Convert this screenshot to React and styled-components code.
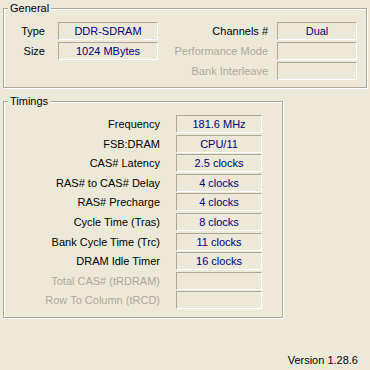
import React from 'react';
import styled, { createGlobalStyle } from 'styled-components';

const Global = createGlobalStyle`
  html, body { margin: 0; padding: 0; background: #ECE9D8; }
  body { font-family: "Liberation Sans", Arial, sans-serif; font-size: 11px; color: #000; }
`;

const Window = styled.div`
  width: 370px;
  height: 370px;
  box-sizing: border-box;
  background: #ECE9D8;
  display: flex;
  flex-direction: column;
  padding-top: 1px;
  overflow: hidden;
`;

const Group = styled.fieldset`
  box-sizing: border-box;
  width: ${p => p.$w}px;
  margin: ${p => p.$mt}px 0 0 3px;
  padding: 7px 0 ${p => p.$pb}px 0;
  border: 1px solid #ACA899;
  box-shadow: inset 1px 1px 0 #fff, 1px 1px 0 #fff;
  min-width: 0;
`;

const Legend = styled.legend`
  margin-left: 4px;
  padding: 0 2px;
  line-height: 14px;
  background: #ECE9D8;
`;

const Grid = styled.div`
  display: grid;
  grid-template-columns: ${p => p.$cols};
  grid-auto-rows: 18px;
  row-gap: ${p => p.$gap}px;
`;

const Label = styled.div`
  text-align: right;
  padding-right: ${p => p.$pad}px;
  line-height: 18px;
  white-space: nowrap;
  color: ${p => (p.$disabled ? '#ACA899' : '#000')};
`;

const Field = styled.div`
  box-sizing: border-box;
  height: 18px;
  border-top: 1px solid #ACA899;
  border-left: 1px solid #ACA899;
  border-bottom: 1px solid #fff;
  border-right: 1px solid #fff;
  display: flex;
  align-items: center;
  justify-content: center;
  color: #000080;
  white-space: nowrap;
`;

const Blank = styled.div``;

const Version = styled.div`
  margin-top: auto;
  text-align: right;
  padding: 0 12px 3px 0;
  line-height: 13px;
`;

const timings = [
  ['Frequency', '181.6 MHz'],
  ['FSB:DRAM', 'CPU/11'],
  ['CAS# Latency', '2.5 clocks'],
  ['RAS# to CAS# Delay', '4 clocks'],
  ['RAS# Precharge', '4 clocks'],
  ['Cycle Time (Tras)', '8 clocks'],
  ['Bank Cycle Time (Trc)', '11 clocks'],
  ['DRAM Idle Timer', '16 clocks'],
  ['Total CAS# (tRDRAM)', '', true],
  ['Row To Column (tRCD)', '', true],
];

export default function App() {
  return (
    <Window>
      <Global />
      <Group $w={364} $mt={0} $pb={7}>
        <Legend>General</Legend>
        <Grid $cols="54px 100px 119px 80px" $gap={2}>
          <Label $pad={13}>Type</Label>
          <Field>DDR-SDRAM</Field>
          <Label $pad={9}>Channels #</Label>
          <Field>Dual</Field>
          <Label $pad={13}>Size</Label>
          <Field>1024 MBytes</Field>
          <Label $pad={9} $disabled>Performance Mode</Label>
          <Field />
          <Blank />
          <Blank />
          <Label $pad={9} $disabled>Bank Interleave</Label>
          <Field />
        </Grid>
      </Group>
      <Group $w={280} $mt={6} $pb={8}>
        <Legend>Timings</Legend>
        <Grid $cols="172px 86px" $gap={1.6}>
          {timings.map(([l, v, d]) => (
            <React.Fragment key={l}>
              <Label $pad={16} $disabled={d}>{l}</Label>
              <Field>{v}</Field>
            </React.Fragment>
          ))}
        </Grid>
      </Group>
      <Version>Version 1.28.6</Version>
    </Window>
  );
}
